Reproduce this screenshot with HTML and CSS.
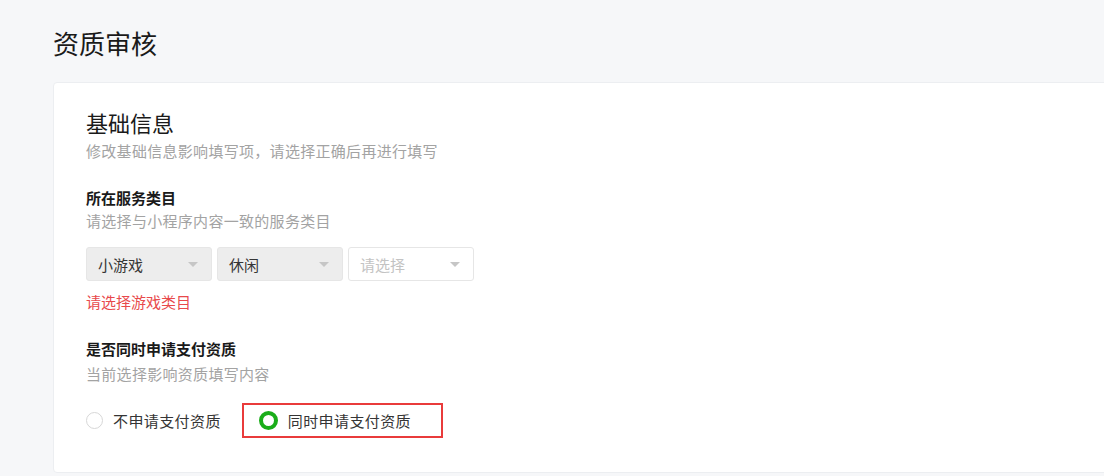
FILE: index.html
```html
<!DOCTYPE html>
<html lang="zh-CN">
<head>
<meta charset="utf-8">
<title>资质审核</title>
<link rel="stylesheet" href="styles.css">
</head>
<body>
<div class="page">
  <h1 class="page-title">资质审核</h1>
  <div class="card">
    <h2 class="card-title">基础信息</h2>
    <p class="card-desc">修改基础信息影响填写项，请选择正确后再进行填写</p>

    <div class="field">
      <div class="field-label">所在服务类目</div>
      <div class="field-desc">请选择与小程序内容一致的服务类目</div>
      <div class="selects">
        <div class="select disabled"><span>小游戏</span><i class="arrow"></i></div>
        <div class="select disabled"><span>休闲</span><i class="arrow"></i></div>
        <div class="select placeholder"><span>请选择</span><i class="arrow"></i></div>
      </div>
      <div class="field-error">请选择游戏类目</div>
    </div>

    <div class="field field-pay">
      <div class="field-label">是否同时申请支付资质</div>
      <div class="field-desc">当前选择影响资质填写内容</div>
      <div class="radios">
        <label class="radio"><span class="dot"></span><span>不申请支付资质</span></label>
        <label class="radio checked highlight"><span class="dot"></span><span>同时申请支付资质</span></label>
      </div>
    </div>
  </div>
</div>
</body>
</html>
```

FILE: styles.css
```css
* { box-sizing: border-box; }
html, body { margin: 0; padding: 0; }
body {
  background: #f6f7f9;
  font-family: "Noto Sans CJK SC", "Noto Sans", sans-serif;
  color: #353535;
  overflow: hidden;
}
.page {
  padding: 25px 0 0 53px;
  width: 1200px;
}
.page-title {
  margin: 0;
  font-size: 26px;
  line-height: 36px;
  font-weight: 400;
  color: #1a1a1a;
}
.card {
  margin-top: 21px;
  background: #fff;
  border: 1px solid #eceef1;
  border-radius: 4px;
  padding: 24px 32px 34px;
}
.card-title {
  margin: 0;
  font-size: 22px;
  line-height: 30px;
  font-weight: 400;
  color: #1a1a1a;
}
.card-desc {
  margin: 0;
  font-size: 15px;
  line-height: 28px;
  letter-spacing: 0.3px;
  color: #a3a3a3;
}
.field { margin-top: 21px; }
.field-pay { margin-top: 24px; }
.field-label {
  font-size: 15px;
  line-height: 24px;
  font-weight: 700;
  color: #1a1a1a;
}
.field-desc {
  font-size: 15px;
  line-height: 22px;
  letter-spacing: 0.3px;
  color: #a3a3a3;
}
.field-pay .field-desc { margin-top: 2px; }
.selects {
  display: flex;
  gap: 5px;
  margin-top: 15px;
}
.select {
  width: 126px;
  height: 34px;
  border: 1px solid #e6e6e6;
  border-radius: 3px;
  display: flex;
  align-items: center;
  justify-content: space-between;
  padding: 0 13px 0 11px;
  font-size: 15px;
  color: #353535;
}
.select.disabled { background: #ededed; }
.select.placeholder { background: #fff; color: #c3c3c3; }
.arrow {
  width: 0;
  height: 0;
  border-left: 5px solid transparent;
  border-right: 5px solid transparent;
  border-top: 5px solid #c6c6c6;
}
.field-error {
  margin-top: 10px;
  font-size: 15px;
  line-height: 22px;
  color: #e8494b;
}
.radios {
  display: flex;
  align-items: center;
  gap: 21px;
  margin-top: 18px;
}
.radio {
  display: flex;
  align-items: center;
  flex-shrink: 0;
  white-space: nowrap;
  height: 35px;
  gap: 10px;
  font-size: 15px;
  letter-spacing: 0.4px;
  color: #353535;
}
.dot {
  flex-shrink: 0;
  width: 17px;
  height: 17px;
  border-radius: 50%;
  border: 1px solid #d7d7d7;
  background: #fff;
}
.radio.checked .dot {
  width: 19px;
  height: 19px;
  border: 4px solid #1aad19;
}
.radio.highlight {
  border: 2px solid #e93b3b;
  padding: 0 30px 0 15px;
}
```
